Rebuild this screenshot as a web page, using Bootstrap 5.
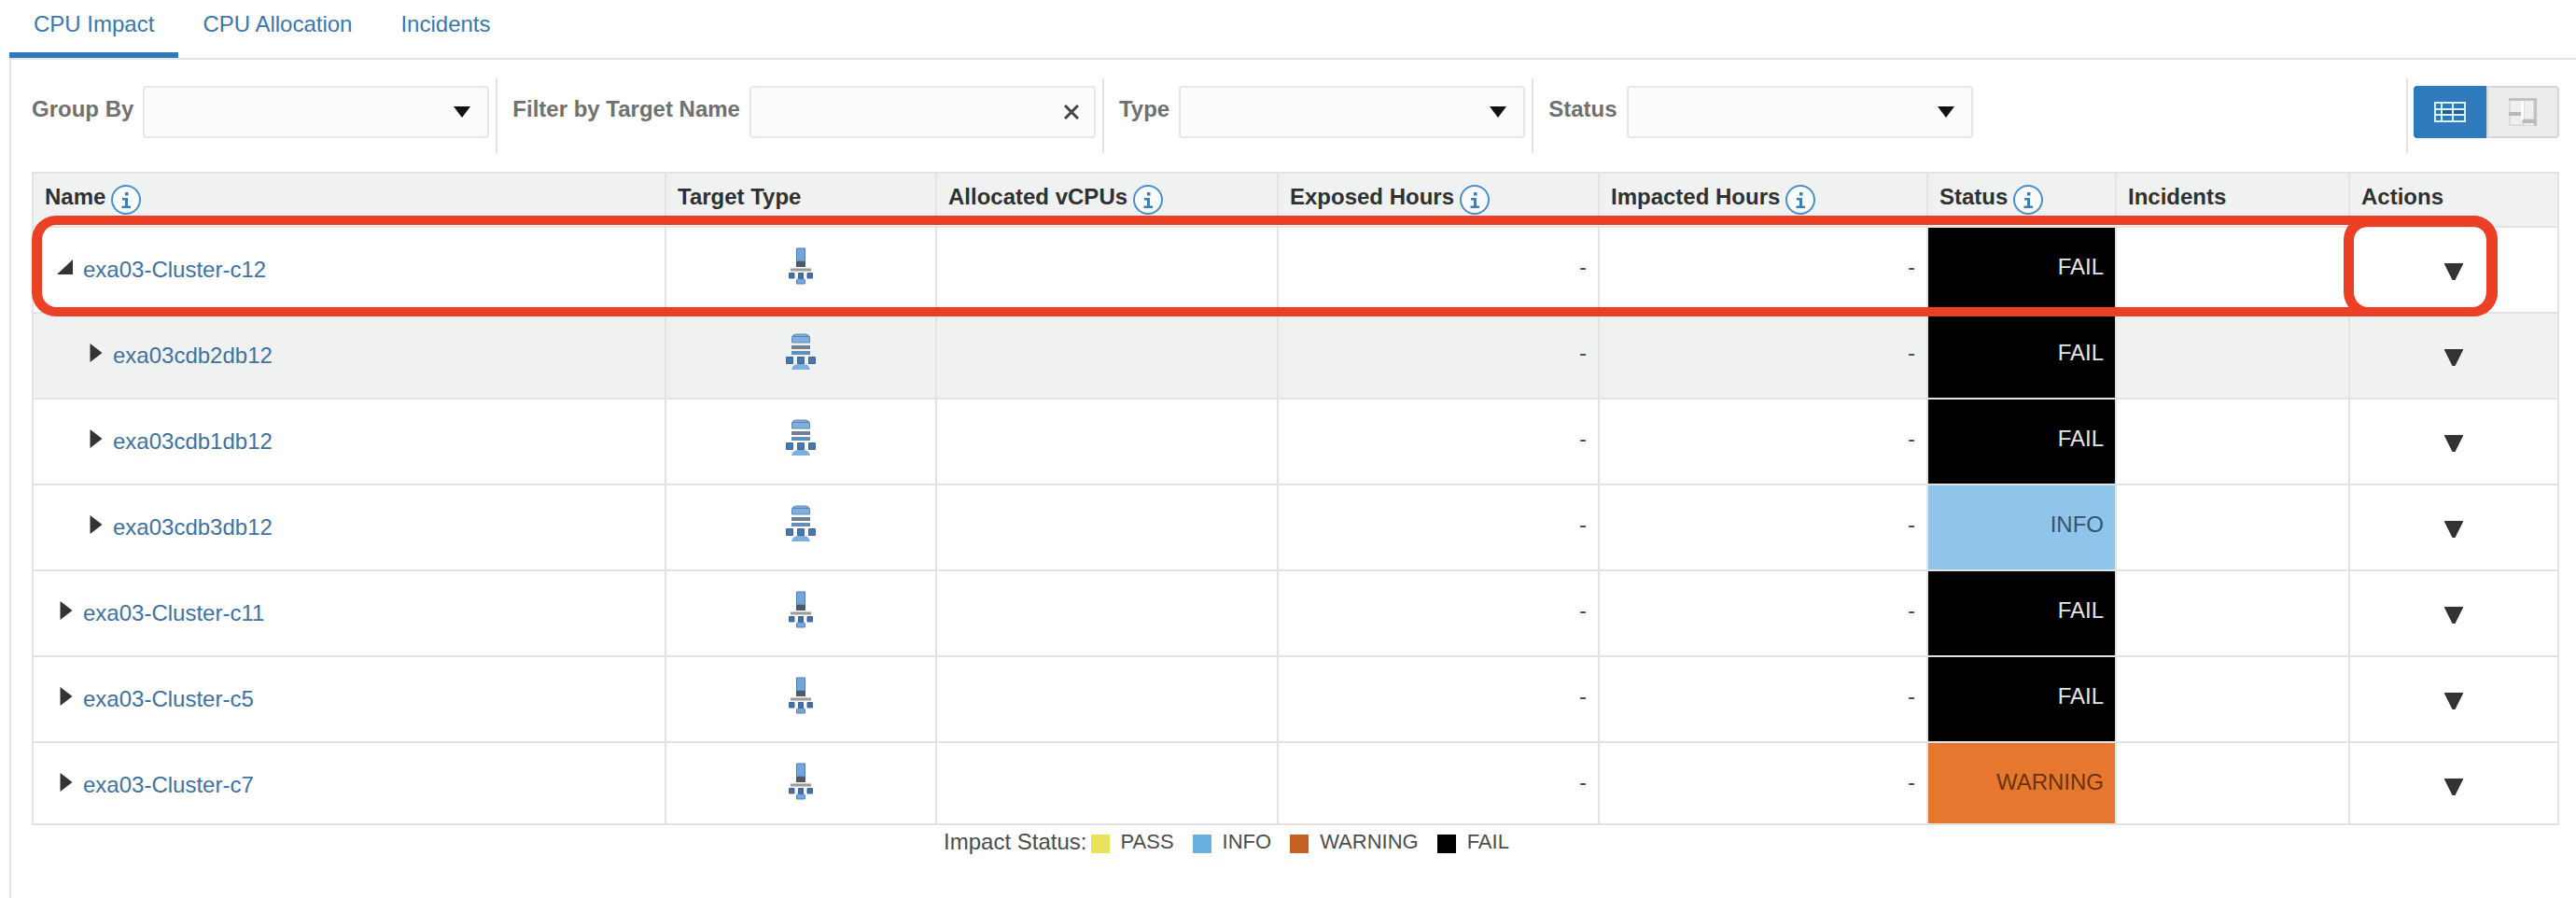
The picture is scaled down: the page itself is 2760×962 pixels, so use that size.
<!DOCTYPE html>
<html lang="en">
<head>
<meta charset="utf-8">
<meta name="viewport" content="width=device-width, initial-scale=1">
<title>CPU Impact</title>
<link href="https://cdn.jsdelivr.net/npm/bootstrap@5.3.0/dist/css/bootstrap.min.css" rel="stylesheet">
<style>
  :root { --line: #e2e4e4; --link: #41719f; --blue: #2f7abd; --shade: #f0f1f1; --callout: #ec4026; }
  body { font-family: "Liberation Sans", Arial, sans-serif; font-size: 24px; line-height: 36px; color: #4c4c4c; background: #fff; padding-left: 10px; }
  svg { display: block; }
  a { text-decoration: none; }

  .page-tabs .nav-link { padding: 8px 26px 12px; border-bottom: 6px solid transparent; color: #3a77aa; }
  .page-tabs .nav-link.active { border-bottom-color: var(--blue); }
  .panel-body { border-top: 2px solid var(--line); border-left: 2px solid var(--line); padding: 20px 18px 20px 22px; }

  .tool-bar { margin-bottom: 20px; }
  .filter-item { height: 80px; gap: 10px; padding: 0 7px 8px 0; margin-right: 16px; border-right: 2px solid var(--line); }
  .filter-item.final { border-right: 0; }
  .filter-item label { font-weight: 700; color: #707070; padding-bottom: 6px; white-space: nowrap; }
  .field { width: 371px; height: 56px; font-size: 24px; border: 2px solid #e6e8e8; border-radius: 4px; background-color: #fbfcfc; }
  select.field { background-image: url("data:image/svg+xml,%3csvg xmlns='http://www.w3.org/2000/svg' viewBox='0 0 18 12'%3e%3cpath fill='%23111' d='M0 0h18L9 12z'/%3e%3c/svg%3e"); background-size: 18px 12px; background-position: right 18px center; }
  .clear-btn { width: 40px; right: 6px; color: #444; }
  .view-switch { height: 80px; padding: 0 0 8px 6px; border-left: 2px solid var(--line); }
  .view-switch .btn { width: 78px; height: 56px; border: 2px solid #d6d7d7; border-radius: 4px; background: #ececec; }
  .view-switch .btn.btn + .btn { margin-left: 0; }
  .view-switch .btn.active { background: var(--blue); border-color: var(--blue); }

  .impact-grid { table-layout: fixed; border-collapse: separate; border-spacing: 0; border-top: 2px solid var(--line); border-left: 2px solid var(--line); }
  .impact-grid th, .impact-grid td { border-right: 2px solid var(--line); border-bottom: 2px solid var(--line); padding: 0 12px; vertical-align: middle; }
  .impact-grid th { height: 58px; background: var(--shade); color: #2f3131; white-space: nowrap; }
  .impact-grid th div { gap: 6px; }
  .impact-grid th span { padding-bottom: 6px; }
  .impact-grid td { height: 92px; }
  .impact-grid tr.shaded td { background-color: var(--shade); }
  .impact-grid a { color: var(--link); }
  .impact-grid td.amount { text-align: right; padding-bottom: 6px; }
  .impact-grid td.kind { padding-bottom: 8px; }
  .impact-grid td.menu { padding-top: 4px; }
  .impact-grid tr.cut td { height: 88px; padding-top: 4px; }
  .impact-grid tr.cut td.menu { padding-top: 8px; }
  .impact-grid tr td.fail { background: #000; color: #e6e6e6; }
  .impact-grid tr td.info { background: #8fc5eb; color: #35546b; }
  .impact-grid tr td.warn { background: #e6772e; color: #6b3310; }
  .node { gap: 9px; padding-left: 12px; }
  .node.child { padding-left: 44px; }
  .node button { margin-bottom: 6px; }
  .c-kind { width: 290px; } .c-vcpu { width: 366px; } .c-exp { width: 344px; } .c-imp { width: 352px; }
  .c-stat { width: 202px; } .c-inc { width: 250px; } .c-act { width: 224px; }

  /* red callouts drawn over the first row */
  .callout { position: absolute; top: 47px; right: 66px; height: 108px; border: 10px solid var(--callout); border-left-width: 11px; border-right-width: 12px; border-radius: 26px; pointer-events: none; }
  .callout.whole-row { left: 0; }
  .callout.menu-only { width: 165px; border-top-width: 12px; }

  .legend-row { padding-right: 148px; color: #4c4c4c; }
  .key { font-size: 22px; gap: 12px; margin-right: 20px; }
  .key i { width: 20px; height: 20px; margin-top: 3px; }
  .key .pass { background: #ebe15f; } .key .info { background: #68b0e0; } .key .warn { background: #c46022; } .key .fail { background: #000; }
</style>
</head>
<body class="min-vh-100 d-flex flex-column">
<svg width="0" height="0" class="position-absolute" aria-hidden="true">
  <symbol id="i-info" viewBox="0 0 32 32"><circle cx="16" cy="16" r="15" fill="#f8fafb" stroke="#4590c8" stroke-width="2"/><path d="M15 8h3.500v3.500H15zM12 14h6v8.500h3V25h-9.500v-2.500H15v-6h-3z" fill="#3a80b8"/></symbol>
  <symbol id="i-open" viewBox="0 0 20 20"><path d="M18 2v16H1z" fill="#333"/></symbol>
  <symbol id="i-shut" viewBox="0 0 20 20"><path d="M4.500 0L17.500 10 4.500 20z" fill="#333"/></symbol>
  <symbol id="i-menu" viewBox="0 0 20 18"><path d="M0 0h20v1l-8.500 17h-3L0 1z" fill="#333"/></symbol>
  <symbol id="i-cluster" viewBox="0 0 26 40">
    <path d="M8.500 1h9v14h-9z" fill="#73a5dc" stroke="#4f7fb4"/><path d="M8 15h10v6H8z" fill="#4d5a68"/>
    <path d="M2 22.500h22v3H2z" fill="#9b9b9b"/>
    <path d="M8.500 39v-4l2-2h5l2 2v4z" fill="#73a5dc" stroke="#5585ba"/>
    <path d="M.5 27.500h5.500v5.500H.5zM10.500 27.500h5v6h-5zM20 27.500h5.500v5.500H20z" fill="#3f70ad" stroke="#43658e"/>
  </symbol>
  <symbol id="i-db" viewBox="0 0 32 40">
    <path d="M6.500 10V4q1-3 5-3h9q4 0 5 3v6z" fill="#7db0e2" stroke="#6287ab"/><path d="M7 3.500h18" stroke="#5f83a8"/>
    <path d="M6 13h20v4H6z" fill="#6f8191"/><path d="M6 19h20v4H6z" fill="#5f8fba"/>
    <path d="M6 39q1-5 6-6h8q5 1 6 6z" fill="#7db0e2"/>
    <path d="M.5 25.500h7v7h-7zM12.500 25.500h7v7h-7zM24.500 25.500h7v7h-7z" fill="#4577b2" stroke="#4b6684"/>
  </symbol>
</svg>

<ul class="nav page-tabs">
  <li class="nav-item"><a class="nav-link active" href="#" aria-current="page">CPU Impact</a></li>
  <li class="nav-item"><a class="nav-link" href="#">CPU Allocation</a></li>
  <li class="nav-item"><a class="nav-link" href="#">Incidents</a></li>
</ul>

<main class="panel-body flex-grow-1">
  <form class="tool-bar d-flex align-items-center">
    <div class="filter-item d-flex align-items-center"><label for="groupBy">Group By</label><select id="groupBy" class="form-select field"><option></option></select></div>
    <div class="filter-item d-flex align-items-center"><label for="target">Filter by Target Name</label>
      <div class="position-relative"><input id="target" type="text" class="form-control field">
        <button type="button" class="btn p-0 border-0 clear-btn position-absolute top-0 h-100 d-flex align-items-center justify-content-center" aria-label="Clear"><svg width="16" height="16" viewBox="0 0 16 16"><path d="M1 1l14 14M15 1L1 15" stroke="#444" stroke-width="3"/></svg></button></div></div>
    <div class="filter-item d-flex align-items-center"><label for="type">Type</label><select id="type" class="form-select field"><option></option></select></div>
    <div class="filter-item final d-flex align-items-center"><label for="status">Status</label><select id="status" class="form-select field"><option></option></select></div>
    <div class="view-switch ms-auto d-flex align-items-center">
      <div class="btn-group">
        <button type="button" class="btn active p-0 d-flex align-items-center justify-content-center" aria-label="Table view"><svg width="34" height="22" viewBox="0 0 34 22"><path d="M1 1h32v20H1z" fill="#2f78b8" stroke="#d5f1fa" stroke-width="2"/><path d="M2 8h30M2 14h30M8 2v18M20 2v18" stroke="#d5f1fa" stroke-width="2"/><path d="M9 9h10v4H9zM21 9h11v4H21z" fill="#275e8f"/></svg></button>
        <button type="button" class="btn p-0 d-flex align-items-center justify-content-center" aria-label="Map view"><svg width="30" height="30" viewBox="0 0 30 30"><path d="M0 0h30v30H0z" fill="#dcdcdc"/><path d="M2 3h11v12H2zM17 3h9v19h-9zM2 19h12v9H2zM17 27h9v2h-9z" fill="#efefef"/><path d="M0 0h30v3H0zM27 0h3v30h-3z" fill="#c2c2c2"/><path d="M0 15h14v4H0zM15 23h15v4H15z" fill="#b9b9b9"/><path d="M13 3h3v20h-3z" fill="#fff"/></svg></button>
      </div>
    </div>
  </form>

  <div class="position-relative">
    <table class="impact-grid w-100">
      <colgroup><col><col class="c-kind"><col class="c-vcpu"><col class="c-exp"><col class="c-imp"><col class="c-stat"><col class="c-inc"><col class="c-act"></colgroup>
      <thead><tr>
        <th scope="col"><div class="d-flex align-items-center"><span>Name</span><svg width="32" height="32"><use href="#i-info"/></svg></div></th>
        <th scope="col"><div class="d-flex"><span>Target Type</span></div></th>
        <th scope="col"><div class="d-flex align-items-center"><span>Allocated vCPUs</span><svg width="32" height="32"><use href="#i-info"/></svg></div></th>
        <th scope="col"><div class="d-flex align-items-center"><span>Exposed Hours</span><svg width="32" height="32"><use href="#i-info"/></svg></div></th>
        <th scope="col"><div class="d-flex align-items-center"><span>Impacted Hours</span><svg width="32" height="32"><use href="#i-info"/></svg></div></th>
        <th scope="col"><div class="d-flex align-items-center"><span>Status</span><svg width="32" height="32"><use href="#i-info"/></svg></div></th>
        <th scope="col"><div class="d-flex"><span>Incidents</span></div></th>
        <th scope="col"><div class="d-flex"><span>Actions</span></div></th>
      </tr></thead>
      <tbody>
        <tr>
          <td><div class="node d-flex align-items-center"><button class="btn p-0 border-0" aria-label="Collapse"><svg width="20" height="20"><use href="#i-open"/></svg></button><a href="#">exa03-Cluster-c12</a></div></td>
          <td class="kind"><svg class="mx-auto" width="26" height="40"><use href="#i-cluster"/></svg></td><td></td><td class="amount">-</td><td class="amount">-</td><td class="amount fail">FAIL</td><td></td>
          <td class="menu"><button class="btn p-0 border-0 d-block mx-auto" aria-label="Actions"><svg width="20" height="18"><use href="#i-menu"/></svg></button></td>
        </tr>
        <tr class="shaded">
          <td><div class="node child d-flex align-items-center"><button class="btn p-0 border-0" aria-label="Expand"><svg width="20" height="20"><use href="#i-shut"/></svg></button><a href="#">exa03cdb2db12</a></div></td>
          <td class="kind"><svg class="mx-auto" width="32" height="40"><use href="#i-db"/></svg></td><td></td><td class="amount">-</td><td class="amount">-</td><td class="amount fail">FAIL</td><td></td>
          <td class="menu"><button class="btn p-0 border-0 d-block mx-auto" aria-label="Actions"><svg width="20" height="18"><use href="#i-menu"/></svg></button></td>
        </tr>
        <tr>
          <td><div class="node child d-flex align-items-center"><button class="btn p-0 border-0" aria-label="Expand"><svg width="20" height="20"><use href="#i-shut"/></svg></button><a href="#">exa03cdb1db12</a></div></td>
          <td class="kind"><svg class="mx-auto" width="32" height="40"><use href="#i-db"/></svg></td><td></td><td class="amount">-</td><td class="amount">-</td><td class="amount fail">FAIL</td><td></td>
          <td class="menu"><button class="btn p-0 border-0 d-block mx-auto" aria-label="Actions"><svg width="20" height="18"><use href="#i-menu"/></svg></button></td>
        </tr>
        <tr>
          <td><div class="node child d-flex align-items-center"><button class="btn p-0 border-0" aria-label="Expand"><svg width="20" height="20"><use href="#i-shut"/></svg></button><a href="#">exa03cdb3db12</a></div></td>
          <td class="kind"><svg class="mx-auto" width="32" height="40"><use href="#i-db"/></svg></td><td></td><td class="amount">-</td><td class="amount">-</td><td class="amount info">INFO</td><td></td>
          <td class="menu"><button class="btn p-0 border-0 d-block mx-auto" aria-label="Actions"><svg width="20" height="18"><use href="#i-menu"/></svg></button></td>
        </tr>
        <tr>
          <td><div class="node d-flex align-items-center"><button class="btn p-0 border-0" aria-label="Expand"><svg width="20" height="20"><use href="#i-shut"/></svg></button><a href="#">exa03-Cluster-c11</a></div></td>
          <td class="kind"><svg class="mx-auto" width="26" height="40"><use href="#i-cluster"/></svg></td><td></td><td class="amount">-</td><td class="amount">-</td><td class="amount fail">FAIL</td><td></td>
          <td class="menu"><button class="btn p-0 border-0 d-block mx-auto" aria-label="Actions"><svg width="20" height="18"><use href="#i-menu"/></svg></button></td>
        </tr>
        <tr>
          <td><div class="node d-flex align-items-center"><button class="btn p-0 border-0" aria-label="Expand"><svg width="20" height="20"><use href="#i-shut"/></svg></button><a href="#">exa03-Cluster-c5</a></div></td>
          <td class="kind"><svg class="mx-auto" width="26" height="40"><use href="#i-cluster"/></svg></td><td></td><td class="amount">-</td><td class="amount">-</td><td class="amount fail">FAIL</td><td></td>
          <td class="menu"><button class="btn p-0 border-0 d-block mx-auto" aria-label="Actions"><svg width="20" height="18"><use href="#i-menu"/></svg></button></td>
        </tr>
        <tr class="cut">
          <td><div class="node d-flex align-items-center"><button class="btn p-0 border-0" aria-label="Expand"><svg width="20" height="20"><use href="#i-shut"/></svg></button><a href="#">exa03-Cluster-c7</a></div></td>
          <td class="kind"><svg class="mx-auto" width="26" height="40"><use href="#i-cluster"/></svg></td><td></td><td class="amount">-</td><td class="amount">-</td><td class="amount warn">WARNING</td><td></td>
          <td class="menu"><button class="btn p-0 border-0 d-block mx-auto" aria-label="Actions"><svg width="20" height="18"><use href="#i-menu"/></svg></button></td>
        </tr>
      </tbody>
    </table>
    <div class="callout whole-row"></div>
    <div class="callout menu-only"></div>
  </div>

  <div class="legend-row d-flex align-items-center justify-content-center">
    <span class="me-1">Impact Status:</span>
    <span class="key d-flex align-items-center"><i class="pass"></i>PASS</span>
    <span class="key d-flex align-items-center"><i class="info"></i>INFO</span>
    <span class="key d-flex align-items-center"><i class="warn"></i>WARNING</span>
    <span class="key d-flex align-items-center me-0"><i class="fail"></i>FAIL</span>
  </div>
</main>
<script src="https://cdn.jsdelivr.net/npm/bootstrap@5.3.0/dist/js/bootstrap.bundle.min.js"></script>
</body>
</html>
